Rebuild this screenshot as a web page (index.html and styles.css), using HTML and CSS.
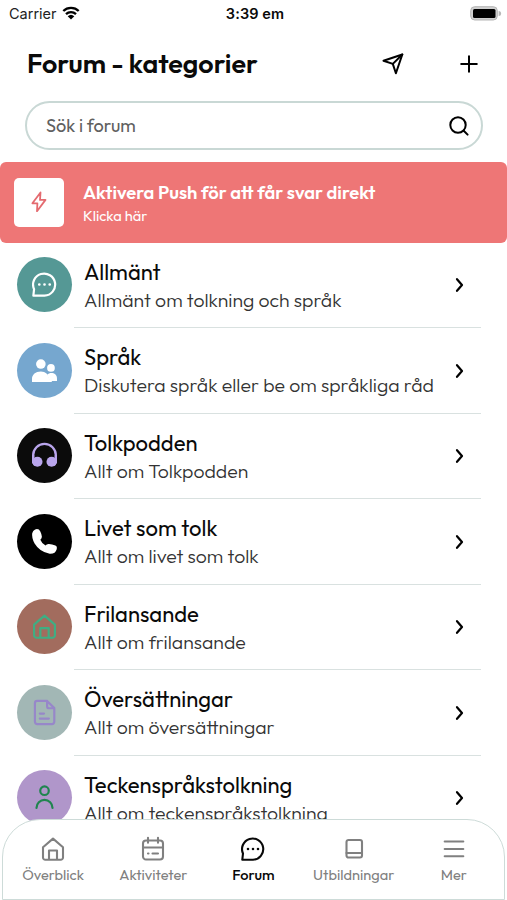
FILE: index.html
```html
<!DOCTYPE html>
<html lang="sv">
<head>
<meta charset="utf-8">
<title>Forum - kategorier</title>
<link rel="stylesheet" href="styles.css">
</head>
<body>
<svg class="defs" aria-hidden="true">
  <symbol id="chat" viewBox="0 0 24 24"><path d="M1.300 22.700 2 16.500A10.600 10.600 0 1 1 12 22.700Z"/><path d="M7 12h.01M12 12h.01M17 12h.01" stroke-width="2.600"/></symbol>
  <symbol id="home" viewBox="0 0 24 24"><path d="M2 10.200 12 1.600l10 8.600V20.500a2.300 2.300 0 0 1-2.300 2.300H4.300A2.300 2.300 0 0 1 2 20.500ZM8 22.500V13.500h8v9"/></symbol>
  <symbol id="chevron" viewBox="0 0 10 16"><path d="m2 2.200 5 5.800-5 5.800"/></symbol>
</svg>
<div class="screen">
  <div class="status">
    <div class="carrier"><span>Carrier</span>
      <svg class="wifi" viewBox="0 0 18 14"><path d="M1.300 5a11 11 0 0 1 15.400 0M4 8.100a7.200 7.200 0 0 1 10 0" fill="none" stroke="#000" stroke-width="2.300"/><path d="m9 13.500-3.300-3.200a4.800 4.800 0 0 1 6.600 0Z"/></svg>
    </div>
    <div class="clock">3:39 em</div>
    <svg class="battery" viewBox="0 0 31 15"><rect x=".7" y=".7" width="26.600" height="13.300" rx="4" fill="#d0d0d0" stroke="#b5b5b5"/><rect x="3" y="3" width="22.500" height="9" rx="1.500"/><path d="M28.600 5v5a2.500 2.500 0 0 0 0-5Z" fill="#b8b8b8"/></svg>
  </div>
  <header class="header">
    <h1>Forum - kategorier</h1>
    <svg class="icon send" viewBox="0 0 22 22"><path d="M20.300 1.500 1.500 7.700l9.300 3.200 3.100 9.300Z"/><path d="m10.800 10.900 9.500-9.400"/></svg>
    <svg class="icon plus" viewBox="0 0 18 18"><path d="M9 1.200v15.600M1.200 9h15.600"/></svg>
  </header>
  <div class="search">
    <span>Sök i forum</span>
    <svg class="icon" viewBox="0 0 20 20"><circle cx="9" cy="9" r="7.700"/><path d="m14.700 14.700 3.900 3.900"/></svg>
  </div>
  <section class="banner">
    <div class="bolt"><svg viewBox="0 0 16 22"><path d="M9.500 1.500 1.400 12.300h5L6 20.200l8.500-11.300H9Z"/></svg></div>
    <div class="banner-text"><strong>Aktivera Push för att får svar direkt</strong><span>Klicka här</span></div>
  </section>
  <main class="list">
    <div class="row general">
      <div class="avatar"><svg viewBox="0 0 24 24"><use href="#chat"/></svg></div>
      <div class="body"><div class="text"><h2>Allmänt</h2><p>Allmänt om tolkning och språk</p></div><svg class="chevron"><use href="#chevron"/></svg></div>
    </div>
    <div class="row language">
      <div class="avatar"><svg class="solid" viewBox="0 0 24 24"><circle cx="18.200" cy="9.500" r="3.700"/><path d="M14.500 16c3-3 9.500-2 9.500 3.700v2.300h-7Z"/><circle cx="8.500" cy="5.800" r="4.600"/><path d="M0 23v-3c0-4 3.500-7 8.500-7 4.500 0 7.500 3 7.900 7 .3 1 1.100 1.300 2.600 1.800V23Z"/></svg></div>
      <div class="body"><div class="text"><h2>Språk</h2><p>Diskutera språk eller be om språkliga råd</p></div><svg class="chevron"><use href="#chevron"/></svg></div>
    </div>
    <div class="row podcast">
      <div class="avatar"><svg class="solid" viewBox="0 0 24 24"><path d="M1.100 18V11.800a10.900 10.900 0 0 1 21.800 0V18" fill="none" stroke="currentColor" stroke-width="2.200"/><circle cx="5.200" cy="18" r="4.900"/><circle cx="18.800" cy="18" r="4.900"/><path d="M0 11.500h2.200v4l2 1-2 5.500L0 19ZM24 11.500h-2.200v4l-2 1 2 5.500 2.200-3Z"/></svg></div>
      <div class="body"><div class="text"><h2>Tolkpodden</h2><p>Allt om Tolkpodden</p></div><svg class="chevron"><use href="#chevron"/></svg></div>
    </div>
    <div class="row life">
      <div class="avatar"><svg class="solid" viewBox="0 0 24 24"><path d="M3 .4Q6.500-.8 8 2.400q1.400 3 1.500 5-.2 1.800-1.500 3 1 3 5 5.500 1-1.700 3.300-1.500 2.800.2 6.200 1.500 2 .9 1.300 3.200-1.300 5-6.800 4.700Q7.500 22.300 2.500 14-.5 8 .2 4 .8 1.300 3 .4Z"/></svg></div>
      <div class="body"><div class="text"><h2>Livet som tolk</h2><p>Allt om livet som tolk</p></div><svg class="chevron"><use href="#chevron"/></svg></div>
    </div>
    <div class="row freelance">
      <div class="avatar"><svg viewBox="0 0 24 24"><use href="#home"/></svg></div>
      <div class="body"><div class="text"><h2>Frilansande</h2><p>Allt om frilansande</p></div><svg class="chevron"><use href="#chevron"/></svg></div>
    </div>
    <div class="row translation">
      <div class="avatar"><svg viewBox="0 0 24 24"><path d="M14.500.9H5A2.200 2.200 0 0 0 2.800 3.100v17.800A2.200 2.200 0 0 0 5 23.100h14.200a2.200 2.200 0 0 0 2.200-2.200V7.800ZM14.500.9v5a2 2 0 0 0 2 2h4.900M7.500 13h4M7.500 17.800h8.700"/></svg></div>
      <div class="body"><div class="text"><h2>Översättningar</h2><p>Allt om översättningar</p></div><svg class="chevron"><use href="#chevron"/></svg></div>
    </div>
    <div class="row sign">
      <div class="avatar"><svg viewBox="0 0 24 24"><circle cx="12" cy="5.500" r="4.100"/><path d="M4.300 22a7.700 7.700 0 0 1 15.400 0"/></svg></div>
      <div class="body"><div class="text"><h2>Teckenspråkstolkning</h2><p>Allt om teckenspråkstolkning</p></div><svg class="chevron"><use href="#chevron"/></svg></div>
    </div>
  </main>
  <nav class="tabs">
    <div class="tab"><svg viewBox="0 0 24 24"><use href="#home"/></svg><span>Överblick</span></div>
    <div class="tab"><svg viewBox="0 0 24 24"><rect x="2" y="3.500" width="20" height="19" rx="3"/><path d="M7 .8v5M17 .8v5M2 10.500h20M7 16.500h.5M11.500 16.500h5.500"/></svg><span>Aktiviteter</span></div>
    <div class="tab active"><svg viewBox="0 0 24 24"><use href="#chat"/></svg><span>Forum</span></div>
    <div class="tab"><svg viewBox="0 0 24 24"><rect x="4.500" y="3" width="15.500" height="17.500" rx="2"/><path d="M4.500 16H20"/></svg><span>Utbildningar</span></div>
    <div class="tab"><svg viewBox="0 0 24 24"><path d="M2.700 4.500h18.600M2.700 12h18.600M2.700 19.300h18.600"/></svg><span>Mer</span></div>
  </nav>
</div>
</body>
</html>
```
FILE: styles.css
```css
* { box-sizing: border-box; }
body { margin: 0; background: #fff; color: #0a0a0a; font-family: Outfit, Lato, sans-serif; }
h1, h2, p { margin: 0; }
svg { display: block; flex: none; overflow: visible; }
.defs { position: absolute; width: 0; height: 0; }
.screen { position: relative; width: 507px; height: 900px; overflow: hidden; display: flex; flex-direction: column; }

.status { height: 27px; flex: none; display: grid; grid-template-columns: 1fr auto 1fr; align-items: center; padding: 0 6px 0 9px; font-family: Inter, sans-serif; font-size: 14.500px; }
.carrier { display: flex; align-items: center; gap: 5px; color: #222; }
.wifi { width: 18px; height: 14px; margin-bottom: 1px; }
.clock { font-weight: 600; letter-spacing: .1px; }
.battery { width: 31px; height: 15px; justify-self: end; }

.header { height: 74px; flex: none; display: flex; align-items: center; padding: 0 29px 1px 27px; }
.header h1 { flex: 1; font-size: 26.850px; line-height: 34px; font-weight: 600; padding-bottom: 1px; }
.icon { fill: none; stroke: #000; stroke-width: 2; stroke-linecap: round; stroke-linejoin: round; }
.send { width: 22px; height: 22px; margin-right: 56px; }
.plus { width: 18px; height: 18px; }

.search { height: 49px; flex: none; margin: 0 24px 0 25px; padding: 0 12px 0 19px; border: 2px solid #c9d8d5; border-radius: 25px; display: flex; align-items: center; justify-content: space-between; font-size: 18.100px; color: #606060; }
.search .icon { width: 20px; height: 20px; }

.banner { height: 80.500px; flex: none; margin-top: 12px; padding-left: 14px; border-radius: 6px; background: #ee7676; color: #fff; display: flex; align-items: center; gap: 19px; }
.bolt { width: 50px; height: 49px; border-radius: 5px; background: #fff; display: grid; place-items: center; }
.bolt svg { width: 16px; height: 22px; fill: none; stroke: #e46b70; stroke-width: 1.800; stroke-linejoin: round; }
.banner-text { display: flex; flex-direction: column; gap: 1px; padding-top: 2px; }
.banner strong { font-size: 18.350px; line-height: 24px; font-weight: 600; }
.banner span { font-size: 14.600px; line-height: 20px; }

.list { flex: none; }
.row { height: 85.500px; display: flex; align-items: center; padding: 0 26px 0 17px; gap: 1.500px; }
.avatar { width: 55px; height: 55px; flex: none; margin-bottom: 1px; border-radius: 50%; background: var(--bg); color: var(--fg); display: grid; place-items: center; }
.avatar svg { width: 25px; height: 25px; fill: none; stroke: currentColor; stroke-width: 2.100; stroke-linecap: round; stroke-linejoin: round; }
.avatar svg.solid { fill: currentColor; stroke: none; }
.body { flex: 1; height: 100%; padding: 2px 16px 0 10.500px; border-bottom: 1.500px solid #d9e1e0; display: flex; align-items: center; justify-content: space-between; }
.text { white-space: nowrap; }
.text h2 { font-size: 22px; line-height: 28px; font-weight: 400; }
.text p { font-size: 19.450px; line-height: 28px; font-weight: 300; color: #333; }
.chevron { width: 10px; height: 16px; margin-bottom: 1px; fill: none; stroke: #000; stroke-width: 2.200; stroke-linecap: round; stroke-linejoin: round; }

.general { --bg: #559895; --fg: #fff; }
.language { --bg: #76a7cf; --fg: #fff; }
.podcast { --bg: #0b0b0b; --fg: #b9a5ec; }
.life { --bg: #000; --fg: #fff; }
.freelance { --bg: #a26c5e; --fg: #3fae83; }
.translation { --bg: #a2b7b5; --fg: #9787c9; }
.sign { --bg: #b096ca; --fg: #20854f; }

.tabs { position: absolute; left: 2px; right: 2px; bottom: 0; height: 81px; padding: 0; border: 1.500px solid #cddbd8; border-radius: 38px 38px 0 0; background: #fff; display: grid; grid-template-columns: repeat(5, 1fr); }
.tab { display: flex; flex-direction: column; align-items: center; padding-top: 17px; gap: 5px; font-size: 14.600px; line-height: 18px; color: #808080; }
.tab svg { width: 24px; height: 24px; fill: none; stroke: currentColor; stroke-width: 2.100; stroke-linecap: round; stroke-linejoin: round; }
.active { color: #080808; font-weight: 500; }
```
